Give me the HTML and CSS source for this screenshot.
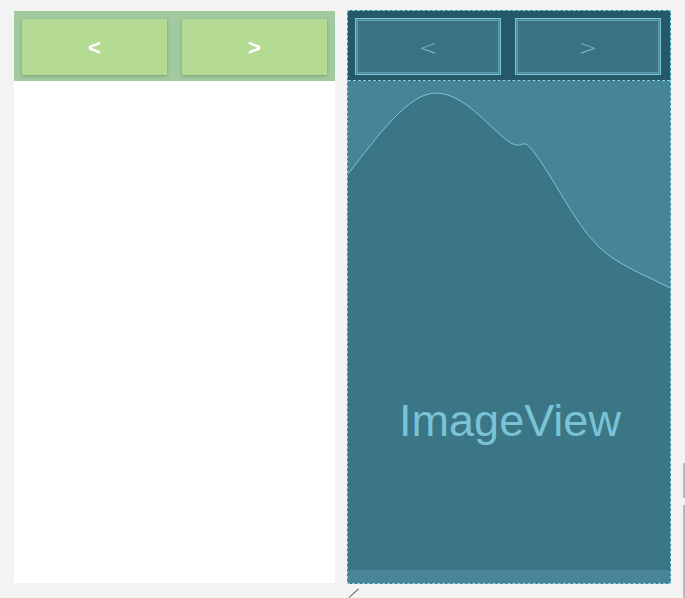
FILE: index.html
```html
<!DOCTYPE html>
<html>
<head>
<meta charset="utf-8">
<link rel="stylesheet" href="styles.css">
</head>
<body>
<div class="canvas">
  <div class="screen design">
    <div class="bar">
      <div class="btn">&lt;</div>
      <div class="btn">&gt;</div>
    </div>
    <div class="body"></div>
  </div>
  <div class="screen blueprint">
    <div class="bar">
      <div class="btn">&lt;</div>
      <div class="btn">&gt;</div>
    </div>
    <div class="image">
      <svg class="curve" viewBox="0 0 322 502" preserveAspectRatio="none">
        <path d="M0 93 C30 55 60 12 88 12 C115 12 140 45 160 60 C168 66 172 64 175 63 C178 62 180 64 185 70 C205 95 225 140 250 165 C270 185 300 195 322 207 L322 502 L0 502 Z" fill="#3b7686"/>
        <path d="M0 93 C30 55 60 12 88 12 C115 12 140 45 160 60 C168 66 172 64 175 63 C178 62 180 64 185 70 C205 95 225 140 250 165 C270 185 300 195 322 207" fill="none" stroke="#7cc4d8" stroke-width="1"/>
      </svg>
      <div class="label">ImageView</div>
      <div class="foot"></div>
    </div>
  </div>
  <div class="handle"></div>
  <div class="scroll one"></div>
  <div class="scroll two"></div>
</div>
</body>
</html>
```
FILE: styles.css
```css
html, body {
  margin: 0;
  padding: 0;
  background: #f3f3f3;
  width: 685px;
  height: 598px;
  overflow: hidden;
  font-family: "Liberation Sans", Arial, sans-serif;
}
.canvas {
  display: flex;
  align-items: flex-start;
  gap: 12px;
  padding: 10px 0 0 14px;
  position: relative;
  height: 588px;
  box-sizing: border-box;
}
.screen {
  display: flex;
  flex-direction: column;
}
.design {
  width: 321px;
  height: 572px;
  margin-top: 1px;
  background: #ffffff;
}
.design .bar {
  height: 70px;
  background: #a3c9a1;
  display: flex;
  gap: 15px;
  padding: 8px 8px 0 8px;
  box-sizing: border-box;
}
.design .btn {
  width: 145px;
  height: 56px;
  background: #b5da94;
  box-shadow: 0 1px 3px rgba(60, 110, 60, 0.45);
  color: #ffffff;
  font-weight: bold;
  font-size: 22px;
  display: flex;
  align-items: center;
  justify-content: center;
  padding-top: 2px;
  box-sizing: border-box;
}
.design .body {
  flex: 1;
  background: #ffffff;
}
.blueprint {
  width: 324px;
  height: 574px;
  box-sizing: border-box;
  border: 1px dashed #86d3ea;
  background: #3b7686;
}
.blueprint .bar {
  height: 71px;
  background: #25596a;
  display: flex;
  gap: 14px;
  padding: 7px 8px 0 7px;
  box-sizing: border-box;
  border-bottom: 1px dashed #86d3ea;
}
.blueprint .btn {
  width: 146px;
  height: 57px;
  box-sizing: border-box;
  background: #3a7282;
  border: 1px solid #7cc6da;
  box-shadow: inset 0 0 0 2px #4a8a9a;
  outline: 1px solid rgba(124, 198, 218, 0.35);
  outline-offset: -3px;
  color: #78bccf;
  font-size: 22px;
  font-family: "DejaVu Sans", sans-serif;
  font-weight: 200;
  display: flex;
  align-items: center;
  justify-content: center;
  padding-top: 1px;
}
.blueprint .image {
  flex: 1;
  display: grid;
  grid-template-rows: 1fr;
  background: #468597;
}
.curve, .label, .foot {
  grid-area: 1 / 1;
}
.curve {
  width: 100%;
  height: 100%;
  display: block;
}
.label {
  align-self: start;
  margin-top: 314px;
  text-align: center;
  color: #7ac2d6;
  font-family: "Liberation Sans", Arial, sans-serif;
  font-size: 45px;
  padding-left: 2px;
}
.foot {
  align-self: end;
  height: 13px;
  background: #4a8597;
}
.handle {
  position: absolute;
  left: 349px;
  top: 597px;
  width: 13px;
  height: 1px;
  background: #555;
  transform: rotate(-42deg);
  transform-origin: left center;
}
.scroll {
  position: absolute;
  left: 683px;
  width: 2px;
  background: #b9b9b9;
}
.scroll.one {
  top: 463px;
  height: 35px;
}
.scroll.two {
  top: 505px;
  height: 93px;
}
```
